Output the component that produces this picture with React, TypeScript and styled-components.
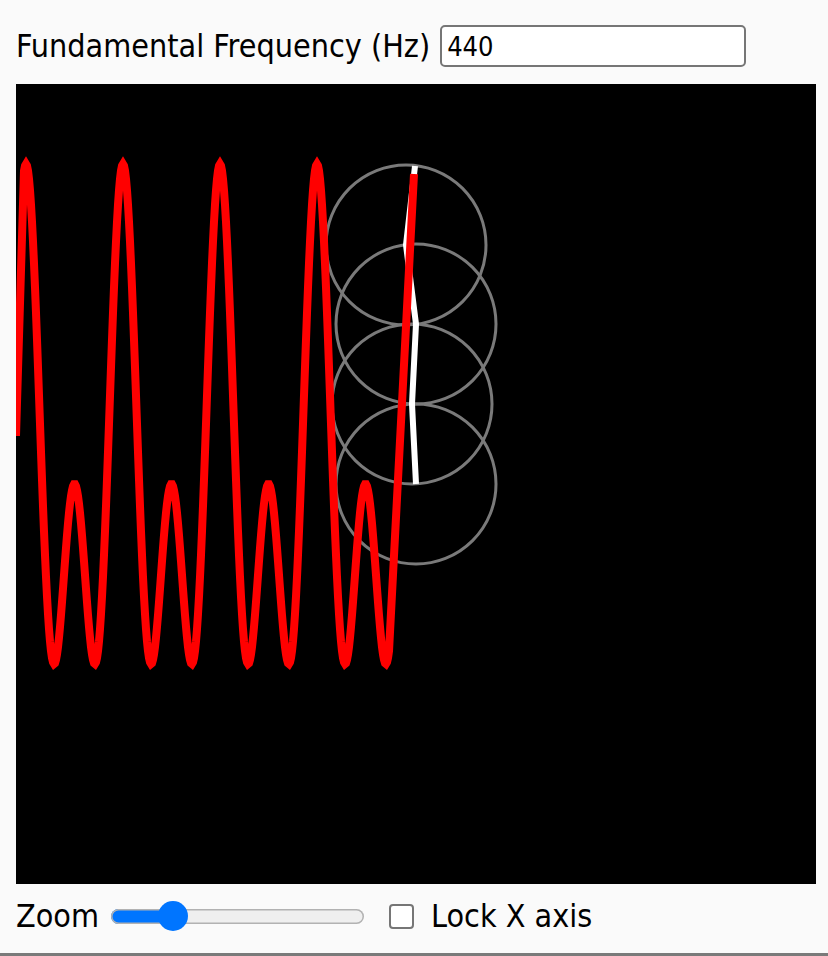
import React from 'react';
import styled, { createGlobalStyle } from 'styled-components';

const GlobalStyle = createGlobalStyle`
  html, body { margin: 0; padding: 0; background: #fafafa; }
  body {
    font-family: "DejaVu Sans Condensed", "DejaVu Sans", sans-serif;
    font-stretch: condensed;
    color: #000;
  }
`;

const Page = styled.div`
  display: flex;
  flex-direction: column;
  min-height: 956px;
  box-sizing: border-box;
`;

const Content = styled.div`
  padding: 16px 16px 0;
`;

const FreqRow = styled.div`
  display: flex;
  align-items: center;
  height: 60px;
  gap: 10px;
`;

const Label = styled.label`
  font-size: 32px;
  line-height: 1;
  white-space: nowrap;
`;

const FreqInput = styled.input`
  width: 306px;
  height: 42px;
  box-sizing: border-box;
  border: 2px solid #767676;
  border-radius: 5px;
  padding: 0 5px;
  font-family: inherit;
  font-stretch: condensed;
  font-size: 27px;
  background: #fff;
  color: #000;
  outline: none;
`;

const Scope = styled.svg`
  display: block;
  width: 800px;
  height: 800px;
  background: #000;
  margin-top: 8px;
`;

const Controls = styled.div`
  display: flex;
  align-items: center;
  height: 64px;
`;

const ZoomSlider = styled.input`
  -webkit-appearance: none;
  appearance: none;
  width: 253px;
  height: 30px;
  margin: 0 0 0 12px;
  padding: 0;
  background: transparent;
  &::-webkit-slider-runnable-track {
    height: 15px;
    border-radius: 8px;
    background: linear-gradient(to right, #0075ff 0, #0075ff var(--fill), #efefef var(--fill));
    box-shadow: inset 0 0 0 1.5px #b2b2b2;
  }
  &::-webkit-slider-thumb {
    -webkit-appearance: none;
    appearance: none;
    width: 30px;
    height: 30px;
    border-radius: 50%;
    background: #0075ff;
    border: none;
    margin-top: -7.5px;
  }
`;

const LockBox = styled.input`
  -webkit-appearance: none;
  appearance: none;
  width: 25px;
  height: 25px;
  box-sizing: border-box;
  margin: 0 0 0 25px;
  border: 2px solid #767676;
  border-radius: 4px;
  background: #fff;
`;

const ControlLabel = styled.label<{ $gap?: number }>`
  font-size: 32px;
  line-height: 1;
  margin-left: ${(p) => p.$gap ?? 0}px;
  white-space: nowrap;
`;

const Footer = styled.div`
  height: 3px;
  background: #7a7a7a;
  margin-top: auto;
`;

// Waveform (canvas-local coordinates; canvas origin at page (16,84))
const OX = 16;
const OY = 84;
const wavePath = (() => {
  const parts: string[] = [`M0 ${436 - OY}`];
  for (let x = 24; x <= 389; x += 1) {
    const th = (2 * Math.PI * (x - 414)) / 97;
    const y = 484 - 160 * (Math.cos(th) + Math.cos(2 * th));
    parts.push(`L${(x - OX).toFixed(2)} ${(y - OY).toFixed(2)}`);
  }
  parts.push(`L${414 - OX} ${174 - OY}`);
  return parts.join(' ');
})();

const chain: [number, number][] = [
  [416, 484],
  [412, 404],
  [416, 324],
  [406, 245],
  [415, 166],
];

export default function App() {
  const [freq, setFreq] = React.useState('440');
  const [zoom, setZoom] = React.useState(21);
  const [lock, setLock] = React.useState(false);
  const fill = `${((zoom / 100) * 223 + 15) / 253 * 100}%`;
  return (
    <>
      <GlobalStyle />
      <Page>
        <Content>
          <FreqRow>
            <Label htmlFor="freq">Fundamental Frequency (Hz)</Label>
            <FreqInput id="freq" value={freq} onChange={(e) => setFreq(e.target.value)} />
          </FreqRow>
          <Scope viewBox="0 0 800 800">
            {chain.slice(0, 4).map(([cx, cy], i) => (
              <circle key={i} cx={cx - OX} cy={cy - OY} r={80} fill="none" stroke="#7a7a7a" strokeWidth={3} />
            ))}
            <polyline
              points={chain.map(([x, y]) => `${x - OX},${y - OY}`).join(' ')}
              fill="none"
              stroke="#fff"
              strokeWidth={6}
            />
            <path d={wavePath} fill="none" stroke="#ff0000" strokeWidth={8} strokeLinejoin="miter" strokeMiterlimit={10} />
          </Scope>
          <Controls>
            <ControlLabel htmlFor="zoom">Zoom</ControlLabel>
            <ZoomSlider
              id="zoom"
              type="range"
              min={0}
              max={100}
              value={zoom}
              onChange={(e) => setZoom(Number(e.target.value))}
              style={{ ['--fill' as string]: fill } as React.CSSProperties}
            />
            <LockBox id="lock" type="checkbox" checked={lock} onChange={(e) => setLock(e.target.checked)} />
            <ControlLabel htmlFor="lock" $gap={17}>Lock X axis</ControlLabel>
          </Controls>
        </Content>
        <Footer />
      </Page>
    </>
  );
}
